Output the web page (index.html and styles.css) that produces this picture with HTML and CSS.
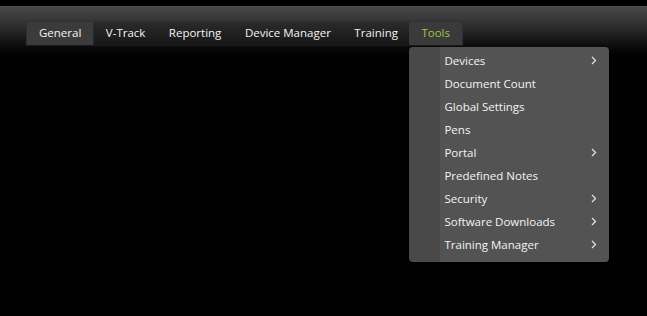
FILE: index.html
```html
<!DOCTYPE html>
<html lang="en">
<head>
    <meta charset="UTF-8">
    <title>Tools</title>
    <link rel="stylesheet" href="styles.css">
</head>
<body>
    <div class="header">
        <ul class="tabs">
            <li class="tab active">General</li>
            <li class="tab">V-Track</li>
            <li class="tab">Reporting</li>
            <li class="tab">Device Manager</li>
            <li class="tab">Training</li>
            <li class="tab open">Tools
                <ul class="menu">
                    <li class="menu-item">Devices <svg class="arrow" viewBox="0 0 6 9"><polyline points="1,1 4.5,4.5 1,8"/></svg></li>
                    <li class="menu-item">Document Count</li>
                    <li class="menu-item">Global Settings</li>
                    <li class="menu-item">Pens</li>
                    <li class="menu-item">Portal <svg class="arrow" viewBox="0 0 6 9"><polyline points="1,1 4.5,4.5 1,8"/></svg></li>
                    <li class="menu-item">Predefined Notes</li>
                    <li class="menu-item">Security <svg class="arrow" viewBox="0 0 6 9"><polyline points="1,1 4.5,4.5 1,8"/></svg></li>
                    <li class="menu-item">Software Downloads <svg class="arrow" viewBox="0 0 6 9"><polyline points="1,1 4.5,4.5 1,8"/></svg></li>
                    <li class="menu-item">Training Manager <svg class="arrow" viewBox="0 0 6 9"><polyline points="1,1 4.5,4.5 1,8"/></svg></li>
                </ul>
            </li>
        </ul>
    </div>
</body>
</html>
```

FILE: styles.css
```css
body {
    margin: 0;
    background: #000;
    font-family: "Open Sans", "Noto Sans", sans-serif;
    font-size: 11.5px;
    color: #f4f4f4;
    height: 316px;
    overflow: hidden;
}
.header {
    margin-top: 6px;
    height: 50px;
    padding: 15px 0 0 26px;
    box-sizing: border-box;
    background: linear-gradient(#4b4a4b, #2a2a2a 45%, #080808 85%, #000);
}
.tabs {
    list-style: none;
    margin: 0;
    padding: 0;
    display: inline-flex;
    border: 1px solid #303030;
    border-bottom-color: #1a1a1a;
    background: linear-gradient(#2b2b2b, #161616);
}
.tab {
    position: relative;
    height: 23px;
    line-height: 22px;
    padding: 0 11.5px 0 12px;
    cursor: pointer;
}
.tab.active {
    background: #3b3b3b;
    border-right: 1px solid #2a2a2a;
}
.tab.open {
    color: #9cc93f;
    background: #3a3a3a;
}
.menu {
    position: absolute;
    top: 25px;
    left: 0;
    width: 200px;
    margin: 0;
    padding: 2px 0 6px;
    list-style: none;
    border-radius: 4px;
    background: linear-gradient(to right, #494949 31px, #535353 31px);
    color: #f4f4f4;
    line-height: 22px;
    z-index: 2;
}
.menu-item {
    display: flex;
    align-items: center;
    justify-content: space-between;
    height: 23px;
    padding: 0 12px 0 35px;
}
.arrow {
    width: 6px;
    height: 9px;
    fill: none;
    stroke: #e0e0e0;
    stroke-width: 1.3;
}
```
